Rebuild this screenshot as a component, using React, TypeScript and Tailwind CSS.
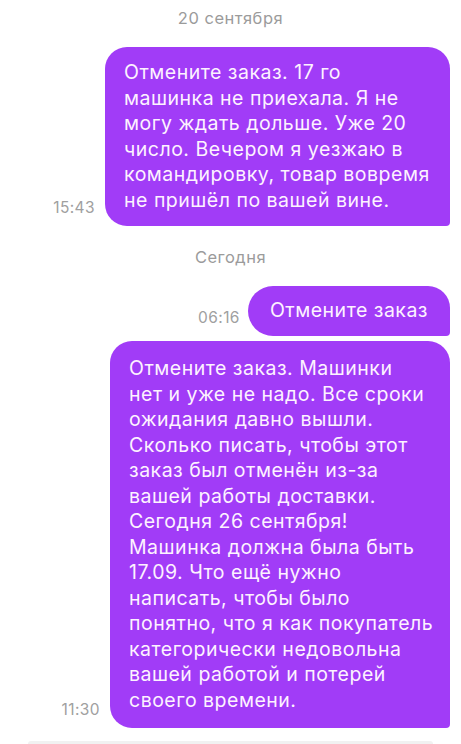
const purple = 'bg-[#a13cf7]'

type Msg = {
  time: string
  lines: string[]
  width: string
  pad: string
}

const messages: { first: Msg; long: Msg } = {
  first: {
    time: '15:43',
    width: 'w-[345px]',
    pad: 'pt-[13px] pb-[13px]',
    lines: [
      'Отмените заказ. 17 го',
      'машинка не приехала. Я не',
      'могу ждать дольше. Уже 20',
      'число. Вечером я уезжаю в',
      'командировку, товар вовремя',
      'не пришёл по вашей вине.',
    ],
  },
  long: {
    time: '11:30',
    width: 'w-[340px]',
    pad: 'pt-[15px] pb-[15px]',
    lines: [
      'Отмените заказ. Машинки',
      'нет и уже не надо. Все сроки',
      'ожидания давно вышли.',
      'Сколько писать, чтобы этот',
      'заказ был отменён из-за',
      'вашей работы доставки.',
      'Сегодня 26 сентября!',
      'Машинка должна была быть',
      '17.09. Что ещё нужно',
      'написать, чтобы было',
      'понятно, что я как покупатель',
      'категорически недовольна',
      'вашей работой и потерей',
      'своего времени.',
    ],
  },
}

const timeCls = 'mb-[8px] text-[15.5px] leading-5 tracking-[0.4px] text-[#a0a0a0]'
const textCls = 'text-[19.5px] leading-[25.5px] tracking-[0.5px] text-[#fdf2ff]'

function DateLabel({ children, className }: { children: string; className?: string }) {
  return (
    <div
      className={`h-5 text-center text-[16.5px] leading-5 tracking-[0.5px] text-[#9b9b9b] ${className ?? ''}`}
    >
      {children}
    </div>
  )
}

function Bubble({ msg, className }: { msg: Msg; className?: string }) {
  return (
    <div className={`flex items-end justify-end pr-[11px] ${className ?? ''}`}>
      <span className={`mr-[10px] ${timeCls}`}>{msg.time}</span>
      <div
        className={`${purple} ${msg.width} ${msg.pad} ${textCls} rounded-[22px] rounded-br-[4px] px-[19px]`}
      >
        {msg.lines.map((l) => (
          <div key={l} className="whitespace-nowrap">
            {l}
          </div>
        ))}
      </div>
    </div>
  )
}

export default function App() {
  return (
    <div
      className="flex h-[744px] w-[461px] flex-col overflow-hidden bg-white"
      style={{ fontFamily: 'Inter, "Noto Sans", sans-serif' }}
    >
      <DateLabel className="mt-[8px]">20 сентября</DateLabel>
      <Bubble msg={messages.first} className="mt-[19px]" />
      <DateLabel className="mt-[21px]">Сегодня</DateLabel>

      <div className="mt-[19px] flex items-end justify-end pr-[11px]">
        <span className={`mr-[8px] ${timeCls}`}>06:16</span>
        <div
          className={`${purple} ${textCls} flex h-[50px] items-center rounded-[25px] rounded-tr-[22px] rounded-br-[4px] px-[22px]`}
        >
          Отмените заказ
        </div>
      </div>

      <Bubble msg={messages.long} className="mt-[5px]" />

      <div className="mx-[28px] mt-[13px] h-[3px] rounded-t bg-[#f1f1f1]" />
    </div>
  )
}
